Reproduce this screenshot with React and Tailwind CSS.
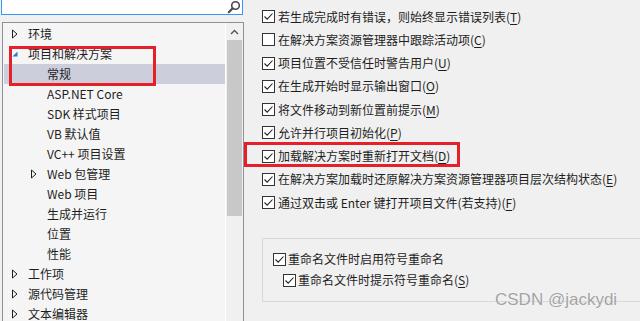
import React from "react";

const font = { fontFamily: '"Noto Sans CJK SC", "Microsoft YaHei", sans-serif' };

const treeItems = [
  { label: "环境", level: 1, exp: "closed" },
  { label: "项目和解决方案", level: 1, exp: "open" },
  { label: "常规", level: 2, selected: true },
  { label: "ASP.NET Core", level: 2 },
  { label: "SDK 样式项目", level: 2 },
  { label: "VB 默认值", level: 2 },
  { label: "VC++ 项目设置", level: 2 },
  { label: "Web 包管理", level: 2, exp: "closed" },
  { label: "Web 项目", level: 2 },
  { label: "生成并运行", level: 2 },
  { label: "位置", level: 2 },
  { label: "性能", level: 2 },
  { label: "工作项", level: 1, exp: "closed" },
  { label: "源代码管理", level: 1, exp: "closed" },
  { label: "文本编辑器", level: 1, exp: "closed" },
];

const options = [
  { text: "若生成完成时有错误，则始终显示错误列表", key: "T", checked: true },
  { text: "在解决方案资源管理器中跟踪活动项", key: "C", checked: false },
  { text: "项目位置不受信任时警告用户", key: "U", checked: true },
  { text: "在生成开始时显示输出窗口", key: "O", checked: true },
  { text: "将文件移动到新位置前提示", key: "M", checked: true },
  { text: "允许并行项目初始化", key: "P", checked: true },
  { text: "加载解决方案时重新打开文档", key: "D", checked: true },
  { text: "在解决方案加载时还原解决方案资源管理器项目层次结构状态", key: "E", checked: true },
  { text: "通过双击或 Enter 键打开项目文件(若支持)", key: "F", checked: true },
];

const Expander = ({ type }) => {
  if (type === "open") {
    return (
      <svg width="8" height="8" viewBox="0 0 8 8">
        <path d="M6.5 1.5 L6.5 6.5 L1.5 6.5 Z" fill="#1c7fd6" />
      </svg>
    );
  }
  return (
    <svg width="8" height="10" viewBox="0 0 8 10">
      <path d="M1.5 1 L6 5 L1.5 9 Z" fill="none" stroke="#1e1e1e" strokeWidth="1" />
    </svg>
  );
};

const CheckBox = ({ checked }) => (
  <div className="w-[13px] h-[13px] border border-[#333333] bg-white flex items-center justify-center shrink-0">
    {checked && (
      <svg width="11" height="11" viewBox="0 0 11 11">
        <path d="M1.5 5.5 L4.2 8.2 L9.5 2.5" fill="none" stroke="#222" strokeWidth="1.1" />
      </svg>
    )}
  </div>
);

const Label = ({ text, k }) => (
  <span className="text-[12px] leading-[16px] text-[#1e1e1e] whitespace-nowrap">
    {text}
    {k && (
      <>
        (<span className="underline underline-offset-2">{k}</span>)
      </>
    )}
  </span>
);

const App = () => {
  return (
    <div className="w-[640px] h-[321px] overflow-hidden bg-[#f0f0f0] flex relative" style={font}>
      {/* left: search + tree */}
      <div className="w-[245px] shrink-0 flex flex-col">
        <div className="ml-[1px] w-[242px] h-[17px] bg-white border-l border-r border-b border-[#3399ff] flex justify-end items-start pr-[1px]">
          <svg width="14" height="14" viewBox="0 0 14 14" className="mt-[0px]">
            <circle cx="8.5" cy="5.5" r="3.8" fill="none" stroke="#4a4a4a" strokeWidth="1.6" />
            <path d="M5.7 8.3 L1.8 12.2" stroke="#4a4a4a" strokeWidth="2.2" strokeLinecap="round" />
          </svg>
        </div>
        <div className="mt-[7px] ml-[2px] w-[242px] flex-1 border-t border-l border-r border-[#8e8f99] flex">
          <div className="w-[223px] bg-[#f5f5f5] border-r border-white pl-[1px] pt-[1px]">
            {treeItems.map((it) => (
              <div
                key={it.label}
                className={`h-[20px] flex items-center ${it.selected ? "bg-[#cccedb]" : ""}`}
              >
                <div className={`${it.level === 1 ? "w-[24px]" : "w-[43px]"} shrink-0 flex justify-end pr-[4px]`}>
                  {it.exp && (
                    <div className={it.level === 1 ? "mr-[5px]" : "mr-[5px]"}>
                      <Expander type={it.exp} />
                    </div>
                  )}
                </div>
                <span className="text-[12px] leading-[16px] text-[#1e1e1e] whitespace-nowrap">{it.label}</span>
              </div>
            ))}
          </div>
          <div className="flex-1 bg-[#f0f0f0] flex flex-col items-center">
            <div className="h-[17px] flex items-center justify-center">
              <svg width="9" height="6" viewBox="0 0 9 6">
                <path d="M1 5 L4.5 1.5 L8 5" fill="none" stroke="#555" strokeWidth="1.4" />
              </svg>
            </div>
            <div className="w-[15px] h-[176px] bg-[#c8c8c8]" />
          </div>
        </div>
      </div>

      {/* right: options */}
      <div className="flex-1 pl-[17px] pt-[5px] overflow-hidden">
        {options.map((o) => (
          <div key={o.key} className="h-[23.25px] flex items-center gap-[3px]">
            <CheckBox checked={o.checked} />
            <Label text={o.text} k={o.key} />
          </div>
        ))}
        <div className="mt-[24px] w-[420px] h-[64px] border border-[#d9d9d9] pt-[10px] pl-[10px]">
          <div className="h-[20px] flex items-center gap-[2px]">
            <CheckBox checked />
            <Label text="重命名文件时启用符号重命名" />
          </div>
          <div className="h-[22px] flex items-center gap-[2px] pl-[10px]">
            <CheckBox checked />
            <Label text="重命名文件时提示符号重命名" k="S" />
          </div>
        </div>
      </div>

      {/* annotations */}
      <div className="absolute left-[9px] top-[46px] w-[147px] h-[40px] border-[3px] border-[#e5202a]" />
      <div className="absolute left-[244px] top-[142px] w-[216px] h-[25px] border-[3px] border-[#e5202a]" />
      <div
        className="absolute left-[495px] top-[290px] text-[17px] leading-[20px] text-[#a3a3a3] whitespace-nowrap"
        style={{ fontFamily: '"Liberation Sans", Arial, sans-serif', textShadow: "0 0 1px #ffffff" }}
      >
        CSDN @jackydi
      </div>
    </div>
  );
};

export default App;
